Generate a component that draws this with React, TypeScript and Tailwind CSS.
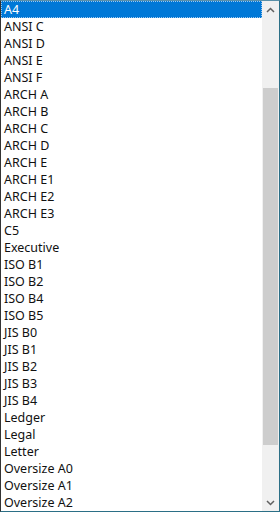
import React from "react";

const items = [
  "A4", "ANSI C", "ANSI D", "ANSI E", "ANSI F", "ARCH A", "ARCH B", "ARCH C", "ARCH D", "ARCH E",
  "ARCH E1", "ARCH E2", "ARCH E3", "C5", "Executive", "ISO B1", "ISO B2", "ISO B4", "ISO B5",
  "JIS B0", "JIS B1", "JIS B2", "JIS B3", "JIS B4", "Ledger", "Legal", "Letter",
  "Oversize A0", "Oversize A1", "Oversize A2",
];

export default function App() {
  return (
    <div className="w-[280px] h-[512px] bg-white border border-[#2b6f86] border-l-[#333] border-t-[#5a8fa8] flex overflow-hidden" style={{ fontFamily: '"Noto Sans", "Open Sans", sans-serif' }}>
      <div className="flex-1 flex flex-col">
        {items.map((t, i) => (
          <div
            key={t}
            className={
              i === 0
                ? "h-[17px] leading-[16px] pl-[2px] text-[12.5px] text-white bg-[#0078d7] border border-dotted border-[#9cc7ee] whitespace-nowrap"
                : "h-[17px] leading-[17px] pl-[3px] text-[12.5px] text-[#111] whitespace-nowrap"
            }
          >
            {t}
          </div>
        ))}
      </div>
      <div className="w-[17px] bg-[#f0f0f0] flex flex-col">
        <div className="h-[17px] flex items-center justify-center">
          <svg width="9" height="6" viewBox="0 0 9 6"><path d="M1 5 L4.5 1.5 L8 5" stroke="#606060" strokeWidth="1.5" fill="none" /></svg>
        </div>
        <div className="h-[70px]" />
        <div className="h-[357px] mx-[1px] bg-[#cdcdcd]" />
        <div className="flex-1" />
        <div className="h-[17px] flex items-center justify-center">
          <svg width="9" height="6" viewBox="0 0 9 6"><path d="M1 1 L4.5 4.5 L8 1" stroke="#606060" strokeWidth="1.5" fill="none" /></svg>
        </div>
      </div>
    </div>
  );
}
